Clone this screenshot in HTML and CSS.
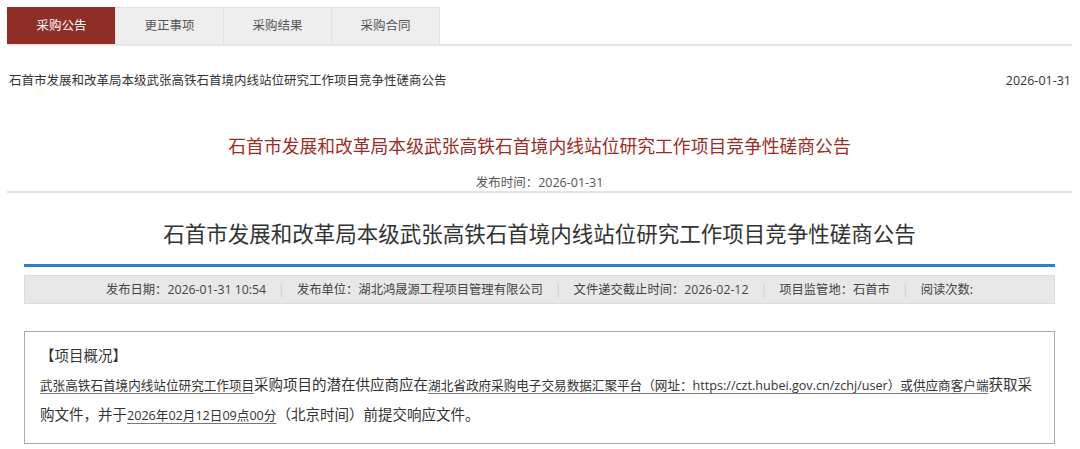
FILE: index.html
```html
<!DOCTYPE html>
<html lang="zh-CN">
<head>
    <meta charset="UTF-8">
    <title>采购公告</title>
    <link rel="stylesheet" href="styles.css">
</head>
<body>
    <!-- Tabs -->
    <div class="tabs">
        <a class="tab active" href="#">采购公告</a>
        <a class="tab" href="#">更正事项</a>
        <a class="tab" href="#">采购结果</a>
        <a class="tab" href="#">采购合同</a>
    </div>

    <!-- List row -->
    <div class="list-row">
        <span>石首市发展和改革局本级武张高铁石首境内线站位研究工作项目竞争性磋商公告</span>
        <span>2026-01-31</span>
    </div>

    <!-- Notice header -->
    <div class="notice-head">
        <h3>石首市发展和改革局本级武张高铁石首境内线站位研究工作项目竞争性磋商公告</h3>
        <p>发布时间：2026-01-31</p>
    </div>

    <!-- Article -->
    <div class="article">
        <h1>石首市发展和改革局本级武张高铁石首境内线站位研究工作项目竞争性磋商公告</h1>
        <div class="meta">
            <span>发布日期：2026-01-31 10:54</span>
            <i>|</i>
            <span>发布单位：湖北鸿晟源工程项目管理有限公司</span>
            <i>|</i>
            <span>文件递交截止时间：2026-02-12</span>
            <i>|</i>
            <span>项目监管地：石首市</span>
            <i>|</i>
            <span>阅读次数:</span>
        </div>

        <div class="summary">
            <p>【项目概况】</p>
            <p><u>武张高铁石首境内线站位研究工作项目</u>采购项目的潜在供应商应在<u>湖北省政府采购电子交易数据汇聚平台（网址：https://czt.hubei.gov.cn/zchj/user）或供应商客户端</u>获取采购文件，并于<u>2026年02月12日09点00分</u>（北京时间）前提交响应文件。</p>
        </div>
    </div>
</body>
</html>
```

FILE: styles.css
```css
body {
    font-family: "Open Sans", "Noto Sans CJK SC", sans-serif;
    color: #333;
    background: #fff;
    margin: 0;
    padding: 7px 8px 0 7px;
}

.tabs {
    display: flex;
    border-bottom: 2px solid #e6e6e6;
}

.tab {
    width: 107px;
    height: 36px;
    line-height: 36px;
    text-align: center;
    font-size: 12.5px;
    color: #555;
    text-decoration: none;
    background: #eeeeee;
    border: 1px solid #e0e0e0;
    border-bottom: none;
    margin-right: -1px;
}

.tab.active {
    background: #8e2e27;
    border-color: #8e2e27;
    color: #fff;
}

.list-row {
    display: flex;
    justify-content: space-between;
    font-size: 12.5px;
    color: #333;
    padding: 26px 1px 0 2px;
    line-height: 17px;
}

.notice-head {
    text-align: center;
    border-bottom: 2px solid #e3e3e3;
    margin-top: 45px;
}

.notice-head h3 {
    font-size: 17.8px;
    font-weight: normal;
    color: #9b2d28;
    margin: 0;
    line-height: 24px;
}

.notice-head p {
    font-size: 12.5px;
    color: #555;
    margin: 16px 0 0;
    line-height: 17px;
    padding-bottom: 0;
}

.article {
    padding: 0 17px;
}

.article h1 {
    font-size: 21.5px;
    font-weight: normal;
    color: #333;
    text-align: center;
    margin: 0;
    padding: 26px 0 15px;
    line-height: 30px;
    border-bottom: 3px solid #2a7fd4;
}

.meta {
    display: flex;
    justify-content: center;
    gap: 12px;
    margin-top: 8px;
    height: 27px;
    line-height: 27px;
    background: #e8e8e8;
    border: 1px solid #dddddd;
    font-size: 12.3px;
    color: #444;
}

.meta i {
    font-style: normal;
    color: #ccc;
}

.summary {
    margin-top: 27px;
    border: 1px solid #aaaaaa;
    padding: 9px 13px 13px 15px;
    font-size: 14.5px;
    color: #333;
}

.summary p {
    margin: 0;
    line-height: 29px;
}

.summary u {
    font-size: 12.6px;
    text-decoration-color: #777;
    text-underline-offset: 3px;
}
```
